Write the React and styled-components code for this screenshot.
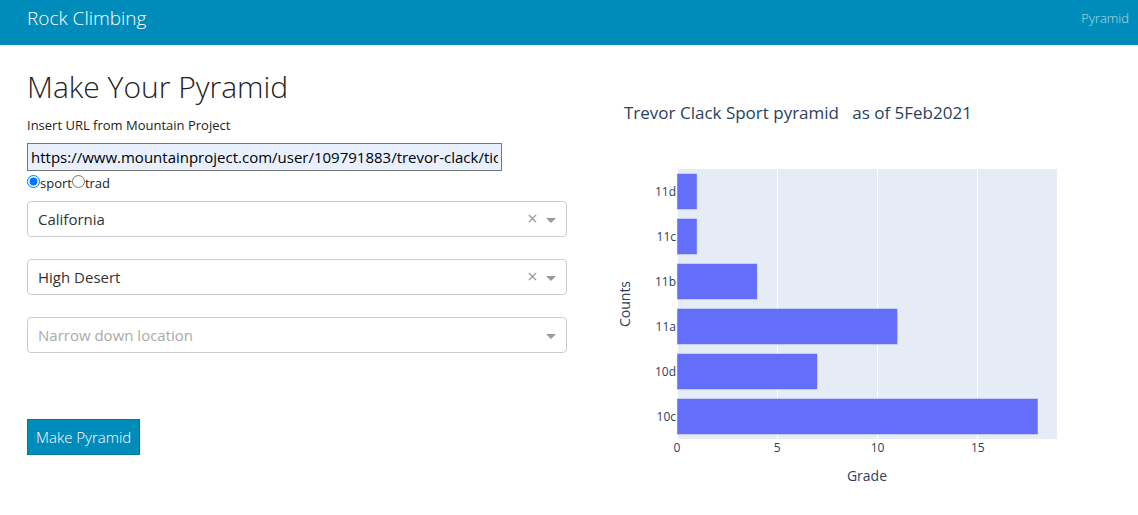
import React, { useState } from "react";
import styled, { createGlobalStyle } from "styled-components";

const GlobalStyle = createGlobalStyle`
  *, *::before, *::after { box-sizing: border-box; }
  body {
    margin: 0;
    background: #fff;
    color: #222;
    font-family: "Open Sans", "Liberation Sans", sans-serif;
    font-size: 13px;
    line-height: 20px;
  }
  button, input, select { font-family: inherit; margin: 0; }
`;

const NavBar = styled.header`
  display: flex;
  align-items: center;
  justify-content: space-between;
  padding: 4px 9px 13px 27px;
  background: #008cba;
`;

const Brand = styled.a`
  color: #fff;
  font-size: 19px;
  font-weight: 300;
  line-height: 28px;
  text-decoration: none;
`;

const NavLink = styled.a`
  color: rgba(255, 255, 255, 0.7);
  font-weight: 300;
  text-decoration: none;
`;

const Columns = styled.main`
  display: grid;
  grid-template-columns: minmax(0, 1fr) minmax(0, 1fr);
  gap: 30px;
  padding: 24px 1px 0 27px;
`;

const Form = styled.form`
  display: flex;
  flex-direction: column;
  align-items: flex-start;
`;

const Heading = styled.h1`
  margin: 0;
  font-size: 30px;
  font-weight: 300;
  line-height: 36px;
`;

const FieldLabel = styled.label`
  margin: 10px 0 8px;
`;

const UrlInput = styled.input`
  width: 88%;
  height: 28px;
  padding: 0 3px;
  border: 1px solid #767676;
  background: #e8f0fe;
  color: #000;
  font-size: 15px;
`;

const RadioRow = styled.div`
  display: flex;
  margin: 2px 0 8px;
`;

const RadioLabel = styled.label`
  display: flex;
  align-items: baseline;
`;

const Radio = styled.input`
  width: 13px;
  height: 13px;
  accent-color: #0075ff;
`;

const Dropdown = styled.div`
  display: flex;
  align-items: center;
  width: 100%;
  height: 36px;
  margin-bottom: 22px;
  padding-right: 10px;
  border: 1px solid #ccc;
  border-radius: 4px;
  background: #fff;
`;

const Select = styled.select`
  flex: 1;
  min-width: 0;
  height: 34px;
  padding: 0 10px;
  border: 0;
  appearance: none;
  background: transparent;
  color: ${(p) => (p.$empty ? "#aaa" : "#333")};
  font-size: 15px;
  outline: none;
`;

const ClearButton = styled.button`
  width: 17px;
  padding: 0 0 2px;
  border: 0;
  background: none;
  color: #999;
  font-size: 18px;
  line-height: 20px;
  cursor: pointer;
`;

const Caret = styled.span`
  margin: 3px 0 0 5px;
  border: 5px solid transparent;
  border-top-color: #999;
  border-bottom-width: 0;
`;

const SubmitButton = styled.button`
  margin-top: 44px;
  padding: 6px 8px;
  border: 1px solid #0079a1;
  background: #008cba;
  color: #fff;
  font-size: 15px;
  font-weight: 300;
  line-height: 22px;
  cursor: pointer;
`;

const ChartSvg = styled.svg`
  display: block;
  width: 100%;
  height: auto;
`;

const ChartText = styled.text`
  fill: #2a3f5f;
  font-size: ${(p) => p.$size}px;
  text-anchor: ${(p) => p.$anchor || "middle"};
  white-space: pre;
`;

const LEFT = 80;
const TOP = 100;
const PLOT_WIDTH = 380;
const PLOT_HEIGHT = 270;
const ROW = 45;
const BAR = 36;
const UNIT = PLOT_WIDTH / (18 / 0.95);

const GRADES = [
  { grade: "11d", count: 1 },
  { grade: "11c", count: 1 },
  { grade: "11b", count: 4 },
  { grade: "11a", count: 11 },
  { grade: "10d", count: 7 },
  { grade: "10c", count: 18 },
];
const TICKS = [0, 5, 10, 15];

function PyramidChart() {
  return (
    <ChartSvg viewBox="0 0 540 440" role="img" aria-label="Sport pyramid">
      <ChartText x={27} y={50} $size={17} $anchor="start">
        {"Trevor Clack Sport pyramid   as of 5Feb2021"}
      </ChartText>
      <rect x={LEFT} y={TOP} width={PLOT_WIDTH} height={PLOT_HEIGHT} fill="#e5ecf6" />
      {TICKS.map((t) => (
        <g key={t}>
          <rect
            x={Math.floor(LEFT + t * UNIT)}
            y={TOP}
            width={1}
            height={PLOT_HEIGHT}
            fill="#fff"
          />
          <ChartText x={LEFT + t * UNIT} y={TOP + PLOT_HEIGHT + 13} $size={12}>
            {t}
          </ChartText>
        </g>
      ))}
      {GRADES.map(({ grade, count }, i) => (
        <g key={grade}>
          <rect
            x={LEFT}
            y={TOP + i * ROW + (ROW - BAR) / 2}
            width={count * UNIT}
            height={BAR}
            fill="#636efa"
            stroke="#e5ecf6"
            strokeWidth={0.5}
          />
          <ChartText x={LEFT - 1} y={TOP + i * ROW + 27} $size={12} $anchor="end">
            {grade}
          </ChartText>
        </g>
      ))}
      <ChartText x={LEFT + PLOT_WIDTH / 2} y={412} $size={14}>
        Grade
      </ChartText>
      <ChartText transform="translate(33 235) rotate(-90)" $size={14}>
        Counts
      </ChartText>
    </ChartSvg>
  );
}

function Picker({ label, options, placeholder, initial = "" }) {
  const [value, setValue] = useState(initial);
  return (
    <Dropdown>
      <Select
        aria-label={label}
        value={value}
        $empty={!value}
        onChange={(e) => setValue(e.target.value)}
      >
        <option value="">{placeholder}</option>
        {options.map((o) => (
          <option key={o}>{o}</option>
        ))}
      </Select>
      {value && (
        <ClearButton type="button" aria-label={`Clear ${label}`} onClick={() => setValue("")}>
          ×
        </ClearButton>
      )}
      <Caret />
    </Dropdown>
  );
}

export default function App() {
  const [style, setStyle] = useState("sport");
  return (
    <>
      <GlobalStyle />
      <NavBar>
        <Brand href="#">Rock Climbing</Brand>
        <nav>
          <NavLink href="#pyramid">Pyramid</NavLink>
        </nav>
      </NavBar>
      <Columns>
        <Form onSubmit={(e) => e.preventDefault()}>
          <Heading>Make Your Pyramid</Heading>
          <FieldLabel htmlFor="url">Insert URL from Mountain Project</FieldLabel>
          <UrlInput
            id="url"
            type="text"
            defaultValue="https://www.mountainproject.com/user/109791883/trevor-clack/ticks"
          />
          <RadioRow>
            {["sport", "trad"].map((s) => (
              <RadioLabel key={s}>
                <Radio
                  type="radio"
                  name="style"
                  value={s}
                  checked={style === s}
                  onChange={() => setStyle(s)}
                />
                {s}
              </RadioLabel>
            ))}
          </RadioRow>
          <Picker
            label="State"
            placeholder="Narrow down location"
            options={["California"]}
            initial="California"
          />
          <Picker
            label="Region"
            placeholder="Narrow down location"
            options={["High Desert"]}
            initial="High Desert"
          />
          <Picker label="Area" placeholder="Narrow down location" options={[]} />
          <SubmitButton type="submit">Make Pyramid</SubmitButton>
        </Form>
        <PyramidChart />
      </Columns>
    </>
  );
}
